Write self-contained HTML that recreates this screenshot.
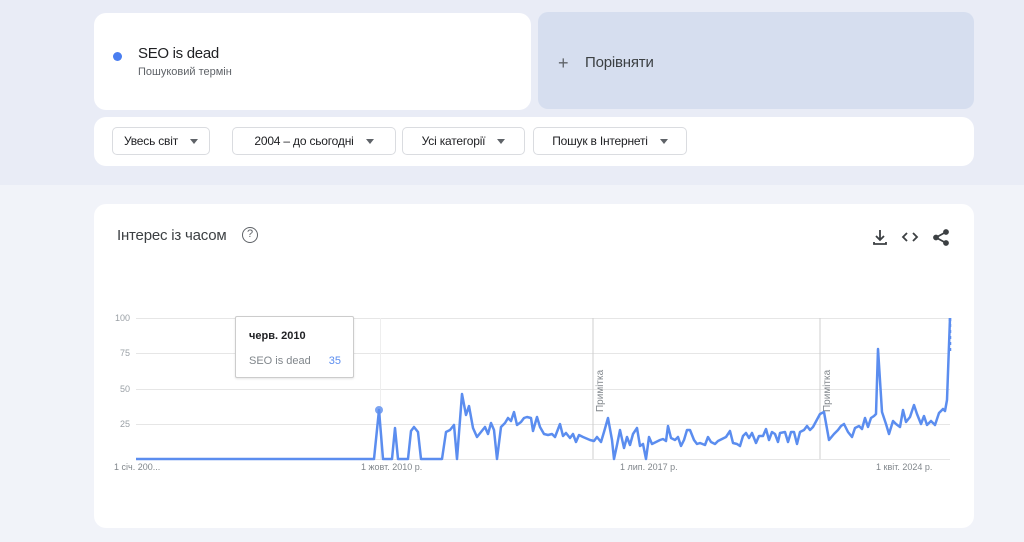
<!DOCTYPE html>
<html><head><meta charset="utf-8"><style>
*{box-sizing:border-box;margin:0;padding:0}
body{width:1024px;height:542px;overflow:hidden;background:#f1f3f9;font-family:"Liberation Sans",sans-serif;position:relative}
.top{position:absolute;left:0;top:0;width:1024px;height:185px;background:#e9ecf6}
.card{position:absolute;background:#fff;border-radius:12px}
.chip{position:absolute;top:127px;height:28px;border:1px solid #dadce0;border-radius:5px;background:#fff;font-size:12px;color:#202124;display:flex;align-items:center;justify-content:center;gap:12px;letter-spacing:-0.2px}
.chip:after{content:"";border-left:4px solid transparent;border-right:4px solid transparent;border-top:5px solid #5f6368}
.yl{position:absolute;left:100px;width:30px;text-align:right;font-size:9px;color:#9aa0a6}
.xl{position:absolute;top:462px;font-size:9px;color:#80868b}
</style></head><body>
<div class="top"></div>
<div class="card" style="left:94px;top:13px;width:437px;height:97px">
 <div style="position:absolute;left:19px;top:39px;width:9px;height:9px;border-radius:50%;background:#4a7ef0"></div>
 <div style="position:absolute;left:44px;top:32px;font-size:15px;color:#202124;letter-spacing:-0.3px">SEO is dead</div>
 <div style="position:absolute;left:44px;top:53px;font-size:11px;color:#5f6368">Пошуковий термін</div>
</div>
<div style="position:absolute;left:538px;top:12px;width:436px;height:97px;background:#d6deef;border-radius:10px">
 <div style="position:absolute;left:20px;top:43px;font-size:18px;color:#5f6368;line-height:16px;font-weight:300">+</div>
 <div style="position:absolute;left:47px;top:42px;font-size:15px;color:#3c4043;letter-spacing:-0.2px">Порівняти</div>
</div>
<div class="card" style="left:94px;top:117px;width:880px;height:49px"></div>
<div class="chip" style="left:112px;width:98px">Увесь світ</div>
<div class="chip" style="left:232px;width:164px">2004 – до сьогодні</div>
<div class="chip" style="left:402px;width:123px">Усі категорії</div>
<div class="chip" style="left:533px;width:154px">Пошук в Інтернеті</div>

<div class="card" style="left:94px;top:204px;width:880px;height:324px"></div>
<div style="position:absolute;left:117px;top:227px;font-size:15px;color:#3c4043;letter-spacing:-0.2px">Інтерес із часом</div>
<div style="position:absolute;left:242px;top:227px;width:16px;height:16px;border:1.5px solid #5f6368;border-radius:50%;font-size:11px;color:#5f6368;text-align:center;line-height:13px">?</div>
<svg style="position:absolute;left:870px;top:228px" width="82" height="18" viewBox="0 0 82 18" fill="none" stroke="#3c4043" stroke-width="1.8">
 <path d="M10 2v10M6 8l4 4 4-4M4 14v2h12v-2"/>
 <path d="M37 5l-4 4 4 4M43 5l4 4-4 4"/>
 <circle cx="76" cy="4" r="2" fill="#3c4043"/><circle cx="66" cy="9.5" r="2" fill="#3c4043"/><circle cx="76" cy="15" r="2" fill="#3c4043"/>
 <path d="M66 9.5L76 4M66 9.5L76 15"/>
</svg>

<div class="yl" style="top:313px">100</div>
<div class="yl" style="top:348px">75</div>
<div class="yl" style="top:384px">50</div>
<div class="yl" style="top:419px">25</div>
<div class="xl" style="left:114px">1 січ. 200...</div>
<div class="xl" style="left:361px">1 жовт. 2010 р.</div>
<div class="xl" style="left:620px">1 лип. 2017 р.</div>
<div class="xl" style="left:876px">1 квіт. 2024 р.</div>
<svg style="position:absolute;left:0;top:0" width="1024" height="542">
 <g stroke="#e6e6e6" stroke-width="1">
  <path d="M136 318.5H950M136 353.5H950M136 389.5H950M136 424.5H950M136 459.5H950"/>
  <path d="M380.5 318V459" stroke="#eee"/>
 </g>
 <path d="M593 318V459M820 318V459" stroke="#cfcfcf" stroke-width="1"/>
 <text transform="translate(603,412) rotate(-90)" font-size="10" fill="#80868b" font-family="Liberation Sans">Примітка</text>
 <text transform="translate(830,412) rotate(-90)" font-size="10" fill="#80868b" font-family="Liberation Sans">Примітка</text>
 <polyline fill="none" stroke="#5b8def" stroke-width="2.5" stroke-linejoin="round" points="136,459 374,459 379,410 383,459 392,459 395,428 398,459 408,459 411,431 414,427 418,432 421,459 442,459 446,432 450,430 454,425 457,459 462,394 466,415 469,406 473,428 477,437 481,432 485,427 488,434 491,423 494,430 497,459 501,427 505,423 508,418 511,421 514,412 517,425 521,422 524,418 527,417 531,418 533,431 537,417 540,427 544,434 548,435 552,434 555,437 560,424 563,436 566,433 570,438 573,434 576,442 579,435 583,437 590,440 594,441 597,437 601,442 604,432 608,418 612,440 614,459 617,445 620,430 624,448 627,437 630,445 633,434 637,428 640,446 643,444 646,459 649,437 652,444 656,442 660,440 663,439 666,441 668,426 671,438 675,440 678,437 681,446 684,440 687,430 690,430 694,440 697,444 700,443 705,445 708,437 711,442 715,444 718,441 722,439 726,437 730,431 733,443 737,444 740,446 743,436 746,433 749,438 752,433 756,443 759,436 763,436 766,429 769,440 772,432 775,434 778,442 780,433 785,432 788,442 791,432 794,432 797,444 800,432 804,430 807,426 810,430 813,427 820,414 824,412 829,440 834,434 838,430 841,426 844,424 848,432 852,437 855,428 859,426 862,429 865,418 868,427 871,418 874,416 876,414 878,349 882,412 886,424 889,434 893,421 896,424 900,427 903,410 906,422 910,417 914,405 917,414 921,424 924,416 927,425 931,421 935,425 939,413 943,409 945,411 947,400 950,318"/>
 <path d="M950 318V352" stroke="#5b8def" stroke-width="2.5" stroke-dasharray="3 3"/>
 <circle cx="379" cy="410" r="4" fill="#5b8def" opacity="0.8"/>
</svg>
<div style="position:absolute;left:235px;top:316px;width:119px;height:62px;background:#fff;border:1px solid #ccc;border-radius:2px;box-shadow:0 1px 2px rgba(0,0,0,.1)">
 <div style="position:absolute;left:13px;top:13px;font-size:11px;font-weight:bold;color:#202124">черв. 2010</div>
 <div style="position:absolute;left:13px;top:38px;font-size:11px;color:#80868b">SEO is dead</div>
 <div style="position:absolute;right:12px;top:38px;font-size:11px;color:#5b8def">35</div>
</div>
</body></html>
